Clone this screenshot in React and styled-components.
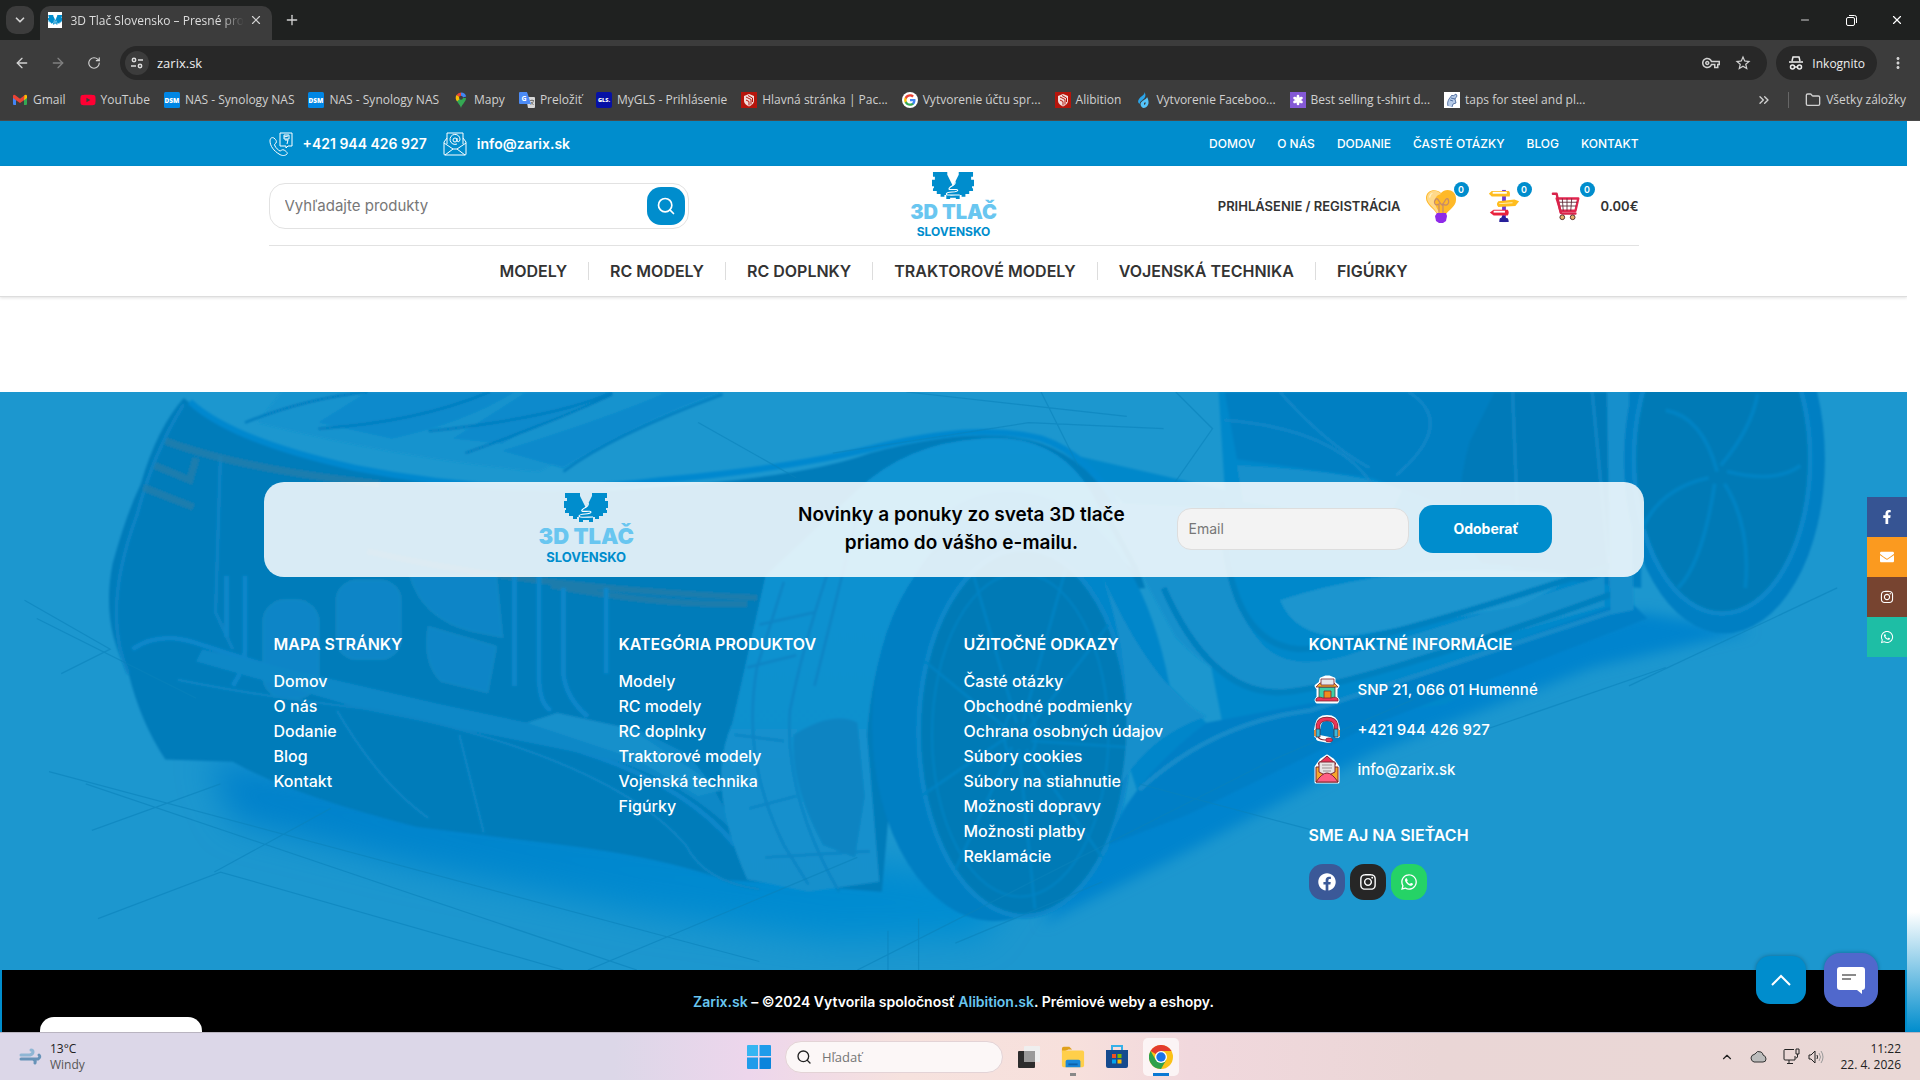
import React from 'react'
import styled, { createGlobalStyle } from 'styled-components'
import { FaFacebookF, FaFacebook, FaEnvelope, FaInstagram, FaWhatsapp, FaYoutube } from 'react-icons/fa'
import { MdOutlineVpnKey, MdStarBorder, MdMoreVert } from 'react-icons/md'
import { LuPlus, LuX, LuChevronDown, LuChevronUp, LuArrowLeft, LuArrowRight, LuRotateCw, LuFolder, LuSearch, LuChevronsRight, LuMinus } from 'react-icons/lu'

const blue = '#008dcd'
const sky = '#69c6f0'
const chromeFont = "12px 'Open Sans', 'Noto Sans', sans-serif"

const topLinks = ['Domov', 'O nás', 'Dodanie', 'Časté otázky', 'Blog', 'Kontakt']
const categories = ['Modely', 'RC modely', 'RC doplnky', 'Traktorové modely', 'Vojenská technika', 'Figúrky']

const footerLists = [
    { title: 'Mapa stránky', links: ['Domov', 'O nás', 'Dodanie', 'Blog', 'Kontakt'] },
    { title: 'Kategória produktov', links: categories },
    {
        title: 'Užitočné odkazy',
        links: [
            'Časté otázky', 'Obchodné podmienky', 'Ochrana osobných údajov', 'Súbory cookies',
            'Súbory na stiahnutie', 'Možnosti dopravy', 'Možnosti platby', 'Reklamácie'
        ]
    }
]

/* ---------- drawings ---------- */

const GearMark = () => (
    <svg viewBox="0 0 44 29" aria-hidden="true">
        <path fill={blue} d="M1 0H16V3L22 15L28 3V0H43V5H41V8H44V15H42V17H43V20H39V23H35V26H31V24H29V29H25V27H19V29H15V24H13V26H9V23H5V20H1V17H2V15H0V8H3V5H1Z" />
        <path fill="none" stroke="#fff" strokeWidth="1.100" d="M24 10C26 14 20 14 18 17C16 20 27 17 27 19C27 22 15 20 15 23C15 25 24 24 29 24" />
    </svg>
)

const BookmarkGlyphs = {
    gmail: (
        <svg viewBox="0 0 16 16">
            <path fill="#4285f4" d="M1 4h3v9H2a1 1 0 0 1-1-1z" />
            <path fill="#34a853" d="M12 5h3v7a1 1 0 0 1-1 1h-2z" />
            <path fill="#fbbc04" d="M12 3.500l1.500-.8Q15 2.600 15 4v2l-3 2.300z" />
            <path fill="#ea4335" d="M1 4Q1.200 2.400 3 3l5 3.800L12.500 3.300l-.5 5L8 11 4 8.200 1 6z" />
        </svg>
    ),
    dsm: (
        <svg viewBox="0 0 16 16">
            <rect width="16" height="16" rx="1.500" fill="#0086e5" />
            <text x="8" y="10.500" textAnchor="middle" fontSize="6.500" fontWeight="800" fill="#fff">DSM</text>
        </svg>
    ),
    maps: (
        <svg viewBox="0 0 16 16">
            <path fill="#34a853" d="M8 16C7 12 3 10 3 6h10c0 4-4 6-5 10z" />
            <path fill="#4285f4" d="M8 0.500a5.500 5.500 0 0 1 5.200 4L8 6z" />
            <path fill="#ea4335" d="M8 0.500a5.500 5.500 0 0 0-4.500 2.500L8 6z" />
            <path fill="#fbbc04" d="M3.500 3A5.500 5.500 0 0 0 4 9.200L8 6z" />
            <circle cx="8" cy="5.800" r="2" fill="#3c3c3c" />
        </svg>
    ),
    translate: (
        <svg viewBox="0 0 16 16">
            <path fill="#d8d8d8" d="M7 5h8a1 1 0 0 1 1 1v9a1 1 0 0 1-1 1H9z" />
            <path fill="#4c8bf5" d="M1 0h7l4 12H1a1 1 0 0 1-1-1V1a1 1 0 0 1 1-1z" />
            <text x="5" y="8.500" textAnchor="middle" fontSize="7" fontWeight="700" fill="#fff">G</text>
            <path fill="none" stroke="#777" d="M11 8.500h4M13 7.500v1M14.500 8.500c0 2-2 3.500-3 4M12 10l2.500 3" />
        </svg>
    ),
    gls: (
        <svg viewBox="0 0 16 16">
            <rect width="16" height="16" rx="2" fill="#0611a5" />
            <text x="8" y="10" textAnchor="middle" fontSize="5.500" fontWeight="800" fill="#fff">GLS.</text>
        </svg>
    ),
    shield: (
        <svg viewBox="0 0 16 16">
            <rect width="16" height="16" fill="#b5150c" />
            <path fill="#f2dedb" d="M8 2l5 2v5c0 2.500-2.500 4.500-5 5.500C5.500 13.500 3 11.500 3 9V4z" />
            <path fill="none" stroke="#b5150c" d="M5 5l5 2.500v5M5 8l3 1.500v4M7 3.500l4.500 2.500v4" />
        </svg>
    ),
    swirl: (
        <svg viewBox="0 0 16 16">
            <path fill="#2aa5ea" d="M9.500 0C10 3 6 4 4 7c-1.500 2-1 4 .5 5C5 9 8 8 9.500 6 11 4 10.500 2 9.500 0z" />
            <path fill="#55c4fa" fillRule="evenodd" d="M12 5c0 2-4 3-6 5.500-1 1.500-.500 4 2 5.500 3 0 5-2 5.500-4.500.4-2-.4-4.500-1.500-6.500zM9 11l1.500-1v2L9 13z" />
        </svg>
    ),
    star: (
        <svg viewBox="0 0 16 16">
            <rect width="16" height="16" fill="#8459d6" />
            <path stroke="#fff" strokeWidth="2.600" strokeLinecap="round" d="M8 4v8M4.500 6l7 4M11.500 6l-7 4" />
        </svg>
    ),
    hand: (
        <svg viewBox="0 0 16 16">
            <rect width="16" height="16" fill="#fff" />
            <path fill="#b6cbe8" stroke="#3b5c92" strokeWidth=".8" d="M4 14c-1-3 0-5 1-7l3-4 1 1 3-2 1 2-2 3 1 4-3 1-1 3M6 8l3 1M7 6l4 1" />
        </svg>
    ),
    youtube: <FaYoutube color="#ff0033" />,
    google: (
        <svg viewBox="0 0 16 16">
            <circle cx="8" cy="8" r="8" fill="#fff" />
            <svg x="2" y="2" width="12" height="12" viewBox="0 0 48 48">
                <path fill="#4285f4" d="M46 24.500c0-1.600-.2-3.200-.4-4.500H24v9h12.500c-.6 3-2.200 5.300-4.700 7v6h7.700C43.800 38 46 31.800 46 24.500z" />
                <path fill="#34a853" d="M24 47c6.200 0 11.400-2 15.500-5l-7.700-6c-2 1.400-4.700 2.300-7.800 2.300-6 0-11-4-13-9.500H3.300v6.200C7.200 42.200 15 47 24 47z" />
                <path fill="#fbbc05" d="M11 28.500a14 14 0 0 1 0-9v-6.200H3.300a23 23 0 0 0 0 21.400z" />
                <path fill="#ea4335" d="M24 10c3.400 0 6.500 1.200 8.900 3.500l6.700-6.700C35.500 3 30.200 1 24 1 15 1 7.200 5.800 3.300 13.300L11 19.500C13 14 18 10 24 10z" />
            </svg>
        </svg>
    )
}

const bookmarks = [
    ['gmail', 'Gmail'], ['youtube', 'YouTube'], ['dsm', 'NAS - Synology NAS'], ['dsm', 'NAS - Synology NAS'],
    ['maps', 'Mapy'], ['translate', 'Preložiť'], ['gls', 'MyGLS - Prihlásenie'], ['shield', 'Hlavná stránka | Pac...'],
    ['google', 'Vytvorenie účtu spr...'], ['shield', 'Alibition'], ['swirl', 'Vytvorenie Faceboo...'],
    ['star', 'Best selling t-shirt d...'], ['hand', 'taps for steel and pl...']
]

const PhoneIcon = () => (
    <svg viewBox="0 0 24 24" fill="none" stroke="#fff" strokeWidth="1">
        <path d="M1 9c0-3 2-4 4-3 2 2 3 3 2 5-1 1-2 1-1 3 1 2 3 4 5 5 1 0 2-2 4-1 2 1 4 3 3 4-2 2-5 2-8 0C5 19 1 14 1 9z" />
        <path d="M11 1h12v13h-4l-2 2v-2h-6zM15 3h5v4h-5zM16 8h3l-1 4M15 5l4-1" />
    </svg>
)

const MailIcon = () => (
    <svg viewBox="0 0 24 24" fill="none" stroke="#fff" strokeWidth="1">
        <path d="M4 12V1h16v11M4 6L1 10v12q0 1 1 1h20q1 0 1-1V10l-3-4M1 11l9 6h4l9-6M2 23l8-6M22 23l-8-6" />
        <circle cx="12" cy="8" r="2" />
        <path d="M14 6v3q2 2 3-1a5 5 0 1 0-3 4" />
    </svg>
)

const BulbIcon = () => (
    <svg viewBox="0 0 32 34">
        <path fill="#ffb928" d="M16 4C21-2 32 1 31 11c0 6-7 10-10 14H12C9 19 1 16 1 9 1 1 11-1 16 4z" />
        <path fill="#ffd98a" d="M16 5C11-1 2 2 2 9c0 6 7 9 10 15h3C8 15 8 7 16 5z" />
        <path fill="none" stroke="#c58a6b" strokeWidth="1.200" d="M14 24V15c-4 3-6-2-3-5 2-2 3 4 6 6 3-3 4-8 6-6 2 4-1 8-5 5v9" />
        <path fill="#fff4c9" d="M4 8q1-4 4-4-3 2-3 5z" />
        <path fill="#8f2ae8" d="M12 24h9l1 3-1 5-3 2h-4l-3-2-1-5z" />
    </svg>
)

const SignIcon = () => (
    <svg viewBox="0 0 32 36">
        <rect x="14" y="1" width="4" height="34" fill="#6b39d0" />
        <path fill="#ffbd1e" d="M3 2h18q2 1 1 6H3L0 5z" />
        <path fill="#fff" d="M4 3h15v2H4z" />
        <path fill="#ffbd1e" d="M10 13l17-2 5 2-4 5-18 1q-3-3 0-6z" />
        <path fill="#fff3c5" d="M11 15l14-1v1l-14 1z" />
        <path fill="#e9223d" d="M5 22h15q2 3 0 6H5l-4-3z" />
        <path fill="#fff" d="M5 23h12v2H5z" />
        <path fill="#27209a" d="M11 35c0-4 1-5 2-4 1-4 4-4 5 0 2-1 3 1 3 4z" />
    </svg>
)

const CartIcon = () => (
    <svg viewBox="0 0 34 34" fill="none">
        <path fill="#fff" stroke="#e2264f" strokeWidth="2.500" strokeLinejoin="round" d="M6 9h23l-3 13H10z" />
        <path stroke="#5b2333" strokeWidth=".9" d="M12 9l1 13M17 9v13M22 9l-1 13M7 13h21M8 17h19" />
        <path stroke="#d9234a" strokeWidth="2.500" strokeLinecap="round" strokeLinejoin="round" d="M2 4h4l4 19q0 2 3 2h13" />
        <circle cx="12" cy="29" r="2.500" fill="#e5b16b" stroke="#4f2a2a" />
        <circle cx="23" cy="29" r="2.500" fill="#e5b16b" stroke="#4f2a2a" />
    </svg>
)

const ShopIcon = () => (
    <svg viewBox="0 0 30 30">
        <path fill="#fff" stroke="#fff" strokeWidth="3" strokeLinejoin="round" d="M9 5l5-2h3l5 2v4l4 3-2 3v8l2 3-1 2H5l-1-2 2-3v-8l-2-3 4-3z" />
        <path fill="#3fcfa6" stroke="#2e4b52" strokeWidth=".8" d="M7 13h16v12H7z" />
        <path fill="#f7b02b" stroke="#7c2630" strokeWidth=".8" d="M8 9h14l4 4H4z" />
        <path fill="#e6e6ea" stroke="#7c2630" strokeWidth=".8" d="M9 5h13v6H9z" />
        <path fill="#f08a1d" stroke="#7c2630" strokeWidth=".8" d="M12 17h7v8h-7z" />
        <path fill="#ec3558" stroke="#7c2630" strokeWidth=".8" d="M4 25q2-3 7-1h8q5-2 7 1v2H4z" />
    </svg>
)

const HeadsetIcon = () => (
    <svg viewBox="0 0 30 30" fill="none">
        <path stroke="#fff" strokeWidth="6" strokeLinecap="round" strokeLinejoin="round" d="M5 21v-5l1-5q1-7 9-7t9 7l1 5v5M7 24l10 2" />
        <path stroke="#7c2630" strokeWidth="4.500" d="M6 16v-5q1-6 9-6t9 6v5" />
        <path stroke="#ec3558" strokeWidth="3" d="M6 16v-5q1-6 9-6t9 6v5" />
        <path fill="#39b8dc" stroke="#3d3340" strokeWidth=".8" d="M4 15h4v8H4zM22 15h4v8h-4z" />
        <path fill="#d8893a" d="M2 16h2v6H2zM26 16h2v6h-2z" />
        <path stroke="#7c2630" strokeWidth="1.200" d="M6 23q2 3 7 3" />
        <ellipse cx="17" cy="26" rx="3.500" ry="2" fill="#ec3558" stroke="#7c2630" strokeWidth=".8" />
    </svg>
)

const LetterIcon = () => (
    <svg viewBox="0 0 30 30">
        <path fill="#fff" stroke="#fff" strokeWidth="3" strokeLinejoin="round" d="M15 2l6 4 5 7v15H4V13l5-7z" />
        <path fill="#ec3558" stroke="#7c2630" d="M15 2l9 8H6z" />
        <path fill="#f7a62b" stroke="#7c2630" d="M4 13h22v15H4z" />
        <path fill="#e8e4e4" stroke="#7c2630" d="M7 8h16v10l-8 4-8-4z" />
        <path stroke="#9a8f90" d="M10 11h10M10 14h10M11 17h8" />
        <path fill="#ff5f83" stroke="#7c2630" d="M4 28q6-9 11-9t11 9z" />
    </svg>
)

const ChromeLogo = () => (
    <svg viewBox="0 0 24 24">
        <circle cx="12" cy="12" r="12" fill="#fbc116" />
        <path fill="#e33b2e" d="M12 12L1.600 6A12 12 0 0 1 22.400 6H12z" />
        <path fill="#2da14c" d="M1.600 6A12 12 0 0 0 12 24l5.200-9L12 12 6.800 15z" />
        <circle cx="12" cy="12" r="6" fill="#fff" />
        <circle cx="12" cy="12" r="4.700" fill="#1a73e8" />
    </svg>
)

// Sketched sports car behind the footer
const CarSketch = () => (
    <Backdrop viewBox="0 320 1557 472" preserveAspectRatio="xMidYMid slice" aria-hidden="true">
        <defs>
            <filter id="soft" x="-20%" y="-20%" width="140%" height="140%"><feGaussianBlur stdDeviation="14" /></filter>
            <filter id="softer" x="-20%" y="-20%" width="140%" height="140%"><feGaussianBlur stdDeviation="5" /></filter>
            <filter id="pencil" x="-5%" y="-5%" width="110%" height="110%"><feGaussianBlur stdDeviation="1" /></filter>
            <linearGradient id="floor" x1="0" y1="0" x2="1" y2="1">
                <stop offset="0" stopColor="#007fca" />
                <stop offset="1" stopColor="#008fd3" />
            </linearGradient>
            <linearGradient id="flank" x1="0" y1="0" x2="0" y2="1">
                <stop offset="0" stopColor="#0c92d2" />
                <stop offset="1" stopColor="#1590cc" />
            </linearGradient>
        </defs>
        <rect y="320" width="1557" height="472" fill="#1c97cf" />

        {/* shadow on the ground */}
        <path filter="url(#soft)" fill="url(#floor)" d="M170 620L600 690L830 720L800 765L680 768L520 745L330 705L190 670Z" />
        <path filter="url(#softer)" fill="#0084ce" d="M910 665L1110 570L1340 500L1430 515L1300 545L1120 615L960 700L850 755Z" />

        <g filter="url(#pencil)">
            {/* upper body and cabin */}
            <path fill="#1593ce" d="M230 320H560L440 385Q330 375 210 345Z" />
            <path fill="#098acc" d="M460 382Q520 345 590 320H545Q500 340 410 368ZM300 320H420Q380 345 320 358L260 345ZM430 320H500Q440 345 410 362L370 358Z" />
            <path fill="none" stroke="#037dbf" strokeWidth="2" d="M200 345Q250 325 300 320M260 350Q340 345 400 320M380 370Q450 345 500 322M460 385Q500 355 590 322M500 320Q460 340 350 352" />
            <path fill="#0688cb" d="M995 320H1330L1320 500L1180 575L1000 600L980 500L940 430L870 370L1000 400Z" />
            <path fill="#007fc2" d="M1000 320H1340V480L1240 470L1200 420L1120 390L1010 375Z" />
            <path fill="#1590cc" d="M1010 380Q1110 385 1145 400L1130 430Q1060 415 1015 410Z" />
            <path fill="#027ab9" d="M1220 320H1325V470L1210 460Q1180 430 1200 360Z" />
            <path fill="none" stroke="#1689c9" strokeWidth="2" d="M1000 343Q1090 350 1120 395M1045 320Q1080 360 1118 382M1150 320Q1190 345 1140 388M1300 320L1315 480M1235 320L1240 450" />

            {/* nose */}
            <path fill="#007bba" d="M150 325Q180 350 250 372Q360 398 500 400Q650 392 710 370Q800 346 850 362Q890 376 915 420L935 480L740 500L720 728L590 718Q540 700 460 690L340 675Q240 650 190 622L135 620Q115 590 105 550Q82 510 92 460Q103 420 115 395Q128 350 150 325Z" />
            <path fill="none" stroke="#0088cf" strokeWidth="5" d="M155 328Q190 360 290 382Q420 408 540 392Q650 382 720 364Q800 345 850 358Q900 375 925 440" />
            <path fill="none" stroke="#0a84c5" strokeWidth="3" d="M150 330Q125 370 112 420Q82 500 105 550M180 372L176 500L190 530" />
            <path fill="none" stroke="#2b7ea6" strokeWidth="6" opacity=".6" d="M135 360Q200 384 310 395M117 398L158 414M126 380L155 392L160 374" />
            <path fill="none" stroke="#2b7ea6" strokeWidth="5" opacity=".7" d="M300 450Q430 480 618 488M450 478Q540 495 610 493" />

            {/* intakes and grille */}
            <g fill="#0785c7" stroke="#168ac6" strokeWidth="1.500">
                <rect x="215" y="490" width="45" height="80" rx="18" />
                <rect x="275" y="474" width="52" height="64" rx="16" />
                <path d="M335 470H405L410 520L385 515Q345 505 335 470Z" />
                <path d="M350 512L405 528L398 565L360 556Q345 540 350 512Z" />
            </g>
            <g fill="none" stroke="#0987ca" strokeWidth="4">
                <path d="M185 470V520M200 470V530Q200 545 190 560M420 470V560M440 470V550Q440 575 450 580M460 480V550Q462 570 480 585M495 480V550" />
                <path d="M108 530Q130 515 160 525L300 570L470 612Q560 640 600 690" />
            </g>
            <path fill="#0988c7" d="M165 530L360 575L440 592L520 595L560 615Q585 640 600 680Q560 640 500 620L300 580L160 540Z" />
            <path fill="#1790cb" d="M430 590L455 582L515 595L590 645L570 650L520 620Z" />
            <path fill="none" stroke="#0b86c5" strokeWidth="2" d="M275 580Q310 640 350 668M375 600L395 680M145 555Q220 570 310 580Q500 620 560 690Q575 720 620 726" />

            {/* front fender */}
            <path fill="url(#flank)" d="M625 470L700 400Q740 362 800 358Q860 352 890 400L925 465L870 420Q810 400 770 440Q715 500 708 600L718 720L660 728L610 718Q575 640 598 590Z" />
            <path fill="none" stroke="#0784c4" strokeWidth="2" d="M675 470Q655 530 645 580Q640 650 685 728M640 475L618 545Q605 620 640 690L660 722M700 420Q680 500 665 560M600 600L640 605M610 545L650 535M620 510L665 500M612 660L650 650M625 700L710 695" />
            <path fill="#0984c2" d="M648 600Q680 580 700 590L706 650L698 700L672 690Q645 640 648 600Z" />
            <path fill="#0086ca" d="M750 440Q790 390 850 405Q930 430 955 560L985 590L930 650L900 560Q880 460 800 455Z" />

            {/* front wheel */}
            <ellipse cx="812" cy="592" rx="100" ry="160" fill="#007fc3" />
            <ellipse cx="836" cy="598" rx="86" ry="150" fill="#007ab6" stroke="#0a88ca" strokeWidth="4" />
            <g fill="none" stroke="#0583c4" strokeWidth="2">
                <path d="M830 590L795 470M835 590L870 465M840 595L905 510M842 605L920 610M838 612L900 700M832 612L845 742M826 610L780 710M822 602L752 650M822 595L755 540" />
                <ellipse cx="833" cy="600" rx="13" ry="22" />
                <ellipse cx="833" cy="600" rx="72" ry="132" strokeWidth="1.500" />
            </g>

            {/* door, sill and skirt */}
            <path fill="#1590cc" d="M900 410L1000 415Q1000 500 1035 530Q1060 550 1110 532L1310 470V495L1080 560Q1010 575 960 520Z" />
            <path fill="#1b95cf" d="M1045 490Q1150 455 1290 470L1240 495L1110 518Q1060 525 1045 490Z" />
            <path fill="none" stroke="#0680bf" strokeWidth="5" d="M998 410Q1000 525 1060 530Q1110 530 1320 460M950 480Q990 570 1050 565Q1110 560 1330 480" />
            <path fill="#168fcc" d="M900 470Q940 560 985 585Q940 600 915 640Q930 560 900 470Z" />
            <path fill="#007fc6" d="M985 590L1120 565L1330 490L1345 505L1120 592L970 665L905 690Q920 640 985 590Z" />
            <path fill="none" stroke="#148cca" strokeWidth="4" d="M930 645Q990 590 1070 580L1330 495" />
            <path fill="#168fcc" d="M1312 320H1330L1334 498L1315 502Z" />

            {/* rear wheel */}
            <ellipse cx="1408" cy="375" rx="82" ry="142" fill="#007fc3" />
            <ellipse cx="1406" cy="375" rx="72" ry="126" fill="#007ab6" stroke="#0a88ca" strokeWidth="4" />
            <g fill="none" stroke="#0583c4" strokeWidth="3">
                <path d="M1402 385Q1390 340 1360 335M1405 380Q1430 350 1435 322M1410 385Q1450 395 1470 380M1408 395Q1430 430 1425 480M1400 395Q1390 460 1370 480M1395 390Q1350 400 1338 440" />
            </g>
        </g>

        {/* construction lines */}
        <g fill="none" stroke="#0a82bb" strokeWidth="1" opacity=".6">
            <path d="M30 505L160 570M75 678L180 640M175 712L270 660M40 630L620 785M70 640L520 792M80 750L180 712L460 792M480 792L700 700M700 792L1040 620L1180 560M780 770L900 720M725 760V792M750 750V792" />
            <path d="M680 370L840 345L950 350M570 345L650 390M850 320L880 380M960 320L990 350L955 400M740 320L920 340M1330 560L1500 480M1200 600L1360 545M930 640L1080 680M20 490L90 530L50 550" />
        </g>
    </Backdrop>
)

const Logo = ({ large }) => (
    <LogoLink href="#" $large={large}>
        <GearMark />
        <strong>3D TLAČ</strong>
        <span>SLOVENSKO</span>
    </LogoLink>
)

/* ---------- page ---------- */

const App = () => {
    return (
        <Screen>
            <GlobalStyle />

            <TabStrip>
                <TabSearch aria-label="Hľadať karty"><LuChevronDown size={14} strokeWidth={3} /></TabSearch>
                <Tab>
                    <Favicon><GearMark /></Favicon>
                    <TabTitle>3D Tlač Slovensko – Presné pro</TabTitle>
                    <BareButton aria-label="Zavrieť kartu"><LuX size={14} /></BareButton>
                </Tab>
                <NewTab aria-label="Nová karta"><LuPlus size={16} /></NewTab>
                <WindowButtons>
                    <BareButton aria-label="Minimalizovať"><LuMinus size={12} /></BareButton>
                    <BareButton aria-label="Obnoviť">
                        <svg width="11" height="11" viewBox="0 0 11 11" fill="none" stroke="#fff"><rect x=".5" y="2.500" width="8" height="8" rx="1.500" /><path d="M3 .5h5.500q2 0 2 2V8" /></svg>
                    </BareButton>
                    <BareButton aria-label="Zavrieť"><LuX size={14} color="#fff" /></BareButton>
                </WindowButtons>
            </TabStrip>

            <Toolbar>
                <NavButtons>
                    <BareButton aria-label="Späť"><LuArrowLeft size={16} /></BareButton>
                    <BareButton aria-label="Dopredu" $dim><LuArrowRight size={16} /></BareButton>
                    <BareButton aria-label="Obnoviť stránku"><LuRotateCw size={14} /></BareButton>
                </NavButtons>
                <Omnibox>
                    <SiteInfo aria-label="Informácie o stránke">
                        <svg width="14" height="14" viewBox="0 0 14 14" fill="none" stroke="#ddd" strokeWidth="1.500"><circle cx="4" cy="4" r="1.700" /><path d="M8 4h5M1 10h5" /><circle cx="10" cy="10" r="1.700" /></svg>
                    </SiteInfo>
                    <Address aria-label="Adresa" defaultValue="zarix.sk" />
                    <BareButton aria-label="Heslá"><MdOutlineVpnKey size={18} /></BareButton>
                    <BareButton aria-label="Pridať záložku"><MdStarBorder size={18} /></BareButton>
                </Omnibox>
                <Incognito>
                    <svg width="16" height="16" viewBox="0 0 16 16" fill="none" stroke="#eee" strokeWidth="1.500"><path d="M4 6l1-4h6l1 4M1 7h14" /><circle cx="4.500" cy="12" r="2" /><circle cx="11.500" cy="12" r="2" /><path d="M6.500 12h3" /></svg>
                    Inkognito
                </Incognito>
                <BareButton aria-label="Ponuka"><MdMoreVert size={18} /></BareButton>
            </Toolbar>

            <BookmarkBar>
                {bookmarks.map(([icon, label], i) => (
                    <Bookmark href="#" key={i}>{BookmarkGlyphs[icon]}{label}</Bookmark>
                ))}
                <BookmarkEnd>
                    <BareButton aria-label="Ďalšie záložky"><LuChevronsRight size={16} /></BareButton>
                    <i />
                    <Bookmark href="#"><LuFolder />Všetky záložky</Bookmark>
                </BookmarkEnd>
            </BookmarkBar>

            <Viewport>
                <Site>
                    <TopBar>
                        <Container>
                            <Contacts>
                                <a href="#"><PhoneIcon />+421 944 426 927</a>
                                <a href="#"><MailIcon />info@zarix.sk</a>
                            </Contacts>
                            <TopMenu>
                                {topLinks.map((link) => <a href="#" key={link}>{link}</a>)}
                            </TopMenu>
                        </Container>
                    </TopBar>

                    <Header>
                        <HeaderRow>
                            <SearchBox>
                                <input aria-label="Vyhľadávanie" placeholder="Vyhľadajte produkty" />
                                <button aria-label="Hľadať"><LuSearch size={20} /></button>
                            </SearchBox>
                            <Logo />
                            <Account>
                                <a href="#">Prihlásenie / Registrácia</a>
                                <IconLink href="#" aria-label="Obľúbené"><BulbIcon /><Badge>0</Badge></IconLink>
                                <IconLink href="#" aria-label="Porovnať"><SignIcon /><Badge>0</Badge></IconLink>
                                <IconLink href="#" aria-label="Košík"><CartIcon /><Badge>0</Badge></IconLink>
                                <Price>0.00€</Price>
                            </Account>
                        </HeaderRow>
                        <CategoryNav>
                            {categories.map((name) => <a href="#" key={name}>{name}</a>)}
                        </CategoryNav>
                    </Header>

                    <Footer>
                        <CarSketch />
                        <Newsletter>
                            <Logo large />
                            <p>Novinky a ponuky zo sveta 3D tlače priamo do vášho e-mailu.</p>
                            <form onSubmit={(e) => e.preventDefault()}>
                                <input type="email" aria-label="Email" placeholder="Email" />
                                <button>Odoberať</button>
                            </form>
                        </Newsletter>
                        <FooterGrid>
                            {footerLists.map(({ title, links }) => (
                                <div key={title}>
                                    <FooterTitle>{title}</FooterTitle>
                                    <FooterList>
                                        {links.map((link) => <li key={link}><a href="#">{link}</a></li>)}
                                    </FooterList>
                                </div>
                            ))}
                            <div>
                                <FooterTitle>Kontaktné informácie</FooterTitle>
                                <ContactLine><ShopIcon />SNP 21, 066 01 Humenné</ContactLine>
                                <ContactLine><HeadsetIcon />+421 944 426 927</ContactLine>
                                <ContactLine><LetterIcon />info@zarix.sk</ContactLine>
                                <FooterTitle $spaced>Sme aj na sieťach</FooterTitle>
                                <Socials>
                                    <Social href="#" aria-label="Facebook" $color="#3b5998"><FaFacebook /></Social>
                                    <Social href="#" aria-label="Instagram" $color="#262626"><FaInstagram /></Social>
                                    <Social href="#" aria-label="WhatsApp" $color="#25d366"><FaWhatsapp /></Social>
                                </Socials>
                            </div>
                        </FooterGrid>
                    </Footer>

                    <Copyright>
                        <p><a href="#">Zarix.sk</a> – ©2024 Vytvorila spoločnosť <a href="#">Alibition.sk</a>. Prémiové weby a eshopy.</p>
                    </Copyright>
                </Site>
                <Scrollbar><div /></Scrollbar>

                <ShareBar>
                    <Share href="#" aria-label="Facebook" $color="#365493"><FaFacebookF /></Share>
                    <Share href="#" aria-label="Email" $color="#fb9a1f"><FaEnvelope /></Share>
                    <Share href="#" aria-label="Instagram" $color="#774430"><FaInstagram /></Share>
                    <Share href="#" aria-label="WhatsApp" $color="#1ebea5"><FaWhatsapp /></Share>
                </ShareBar>
                <Floating>
                    <ToTop aria-label="Hore">
                        <svg width="20" height="12" viewBox="0 0 20 12" fill="none" stroke="#fff" strokeWidth="2"><path d="M1 11l9-9 9 9" /></svg>
                    </ToTop>
                    <Chat aria-label="Chat">
                        <svg width="28" height="28" viewBox="0 0 28 28"><path fill="#fff" d="M3 1h22q3 0 3 3v17q0 3-3 3v4l-5-4H3q-3 0-3-3V4q0-3 3-3z" /><path stroke="#8a8a8a" strokeWidth="2" d="M5 9h14M5 13h9" /></svg>
                    </Chat>
                </Floating>
                <Popup />
            </Viewport>

            <Taskbar>
                <Weather>
                    <svg width="24" height="20" viewBox="0 0 24 20" fill="none" strokeWidth="3" strokeLinecap="round"><path stroke="#8fb6d4" d="M2 8h9q3-1 3-3t-2-2" /><path stroke="#6793b8" d="M2 12h17q3-2 1-4M8 12h6q3 1 2 4" /></svg>
                    <div>13°C<span>Windy</span></div>
                </Weather>
                <TaskCenter>
                    <TaskButton aria-label="Štart">
                        <svg width="24" height="24" viewBox="0 0 24 24" fill="#0a84dc"><path fill="#35b5f2" d="M0 1q0-1 1-1h10v11H0z" /><path fill="#1f9bea" d="M12.500 0H23q1 0 1 1v10H12.500zM0 12.500h11V24H1q-1 0-1-1z" /><path d="M12.500 12.500H24V23q0 1-1 1H12.500z" /></svg>
                    </TaskButton>
                    <TaskSearch>
                        <LuSearch size={16} strokeWidth={2} />
                        <input aria-label="Hľadať" placeholder="Hľadať" />
                    </TaskSearch>
                    <TaskButton aria-label="Zobrazenie úloh">
                        <svg width="24" height="24" viewBox="0 0 24 24"><rect x="1" y="6" width="17" height="17" rx="1" fill="#2c2c2c" /><rect x="7" y="1" width="16" height="16" rx="1" fill="#efefef" /><path fill="#9a9a9a" d="M7 6h11v11H7z" /></svg>
                    </TaskButton>
                    <TaskButton aria-label="Prieskumník" $mark="#888">
                        <svg width="26" height="24" viewBox="0 0 26 24"><path fill="#e0a01b" d="M1 3q0-2 2-2h6l3 3h-4L1 7z" /><path fill="#ffcf4a" d="M1 5h22q2 0 2 2v14q0 2-2 2H3q-2 0-2-2z" /><path fill="#1a87d8" d="M5 23v-6q0-2 2-2h12q2 0 2 2v6z" /><path fill="#0d62aa" d="M8 19h10v2H8z" /></svg>
                    </TaskButton>
                    <TaskButton aria-label="Store">
                        <svg width="24" height="24" viewBox="0 0 24 24"><path fill="none" stroke="#35b0e8" strokeWidth="2" d="M7 6V1h10v5" /><path fill="#154a8e" d="M1 5h22v16q0 2-2 2H3q-2 0-2-2z" /><path fill="#f25022" d="M7 9h4v4H7z" /><path fill="#7fba00" d="M12.500 9h4v4h-4z" /><path fill="#00a4ef" d="M7 14.500h4v4H7z" /><path fill="#ffb900" d="M12.500 14.500h4v4h-4z" /></svg>
                    </TaskButton>
                    <TaskButton aria-label="Chrome" $active $mark="#0a78d4"><ChromeLogo /></TaskButton>
                </TaskCenter>
                <Tray>
                    <LuChevronUp size={14} />
                    <svg width="17" height="14" viewBox="0 0 17 14" fill="#bcbcbc" stroke="#333"><path d="M4 12q-3-1-3-4t4-4q2-4 6-2 2 1 2 3 3 1 3 4t-3 3z" /></svg>
                    <TrayGroup>
                        <svg width="17" height="17" viewBox="0 0 17 17" fill="none" stroke="#222"><path d="M11 1.500H2q-1 0-1 1V11q0 1 1 1h10V8M6 12v3.500M4 15.500h6M13 1h3v5h-3zM14.500 6v3q0 1-2 1" /></svg>
                        <svg width="16" height="14" viewBox="0 0 16 14" fill="none" stroke="#222"><path d="M1 5h2l4-4v12L3 9H1zM9 5q1 2 0 4" /><path stroke="#999" d="M11 3q3 4 0 8M13 1q4 6 0 12" /></svg>
                    </TrayGroup>
                    <div>11:22<br />22. 4. 2026</div>
                </Tray>
            </Taskbar>
        </Screen>
    )
}

const GlobalStyle = createGlobalStyle`
    * {
        box-sizing: border-box;
    }
    body {
        margin: 0;
        font-family: Inter, 'Liberation Sans', sans-serif;
        font-size: 14px;
        color: #333;
    }
    a {
        color: inherit;
        text-decoration: none;
    }
    button, input {
        font: inherit;
        color: inherit;
        border: 0;
        padding: 0;
        background: none;
    }
    p {
        margin: 0;
    }
    svg {
        flex-shrink: 0;
    }
`

const Screen = styled.div`
    display: flex;
    flex-direction: column;
    min-height: 100vh;
`

/* browser */

const TabStrip = styled.div`
    display: flex;
    align-items: center;
    gap: 6px;
    height: 40px;
    padding-left: 6px;
    background: #1f2120;
    color: #ddd;
    font: ${chromeFont};
`
const BareButton = styled.button`
    display: flex;
    align-items: center;
    justify-content: center;
    min-width: 24px;
    height: 24px;
    color: ${(p) => (p.$dim ? '#808080' : '#d2d2d2')};
`
const TabSearch = styled(BareButton)`
    width: 28px;
    height: 28px;
    border-radius: 10px;
    background: #3c3c3c;
`
const NewTab = styled(BareButton)`
    width: 28px;
    height: 28px;
`
const Tab = styled.div`
    display: flex;
    align-items: center;
    align-self: flex-end;
    width: 232px;
    height: 34px;
    padding: 0 4px 6px 8px;
    border-radius: 10px 10px 0 0;
    background: #3c3c3c;
`
const Favicon = styled.span`
    display: flex;
    align-items: center;
    width: 16px;
    height: 16px;
    margin-right: 8px;
    background: #fff;
`
const TabTitle = styled.span`
    flex: 1;
    white-space: nowrap;
    mask-image: linear-gradient(90deg, #000 86%, transparent);
`
const WindowButtons = styled.div`
    display: flex;
    gap: 22px;
    margin-left: auto;
    padding-right: 11px;
`
const Toolbar = styled.div`
    display: flex;
    align-items: center;
    gap: 9px;
    height: 46px;
    padding: 0 10px;
    background: #3c3c3c;
    color: #eee;
    font: ${chromeFont};
`
const NavButtons = styled.div`
    display: flex;
    gap: 12px;
    padding-right: 5px;
`
const Omnibox = styled.div`
    display: flex;
    flex: 1;
    align-items: center;
    gap: 8px;
    height: 34px;
    padding: 0 12px 0 5px;
    border-radius: 17px;
    background: #282828;
    font-size: 13px;
`
const SiteInfo = styled(BareButton)`
    border-radius: 12px;
    background: #3c3c3c;
`
const Address = styled.input`
    flex: 1;
`
const Incognito = styled.button`
    display: flex;
    align-items: center;
    gap: 8px;
    height: 34px;
    padding: 0 12px;
    border-radius: 17px;
    background: #282828;
`
const BookmarkBar = styled.div`
    display: flex;
    align-items: center;
    gap: 14px;
    height: 35px;
    padding: 0 14px 7px 12px;
    border-bottom: 1px solid #4a4a4a;
    background: #3c3c3c;
    color: #d0d0d0;
    font: ${chromeFont};
`
const Bookmark = styled.a`
    display: flex;
    align-items: center;
    gap: 5px;
    white-space: nowrap;
    svg {
        width: 16px;
        height: 16px;
    }
    svg svg {
        width: 12px;
        height: 12px;
    }
`
const BookmarkEnd = styled.div`
    display: flex;
    align-items: center;
    gap: 12px;
    margin-left: auto;
    i {
        width: 1px;
        height: 16px;
        margin-right: 4px;
        background: #666;
    }
`

/* site */

const Viewport = styled.div`
    position: relative;
    display: flex;
    flex: 1;
    background: #fff;
`
const Site = styled.div`
    display: flex;
    flex: 1;
    flex-direction: column;
`
const Scrollbar = styled.div`
    display: flex;
    flex-direction: column;
    justify-content: flex-end;
    width: 13px;
    background: #fff;
    div {
        height: 120px;
        background: linear-gradient(#fff, ${blue});
    }
`
const Container = styled.div`
    display: flex;
    align-items: center;
    justify-content: space-between;
    width: 100%;
    max-width: 1370px;
    margin: 0 auto;
`
const TopBar = styled.div`
    display: flex;
    height: 45px;
    background: ${blue};
    color: #fff;
`
const Contacts = styled.div`
    display: flex;
    gap: 16px;
    font-weight: 600;
    a {
        display: flex;
        align-items: center;
        gap: 10px;
    }
    svg {
        width: 24px;
        height: 24px;
    }
`
const TopMenu = styled.nav`
    display: flex;
    gap: 22px;
    font-size: 12px;
    font-weight: 500;
    text-transform: uppercase;
`
const Header = styled.header`
    border-bottom: 1px solid #ddd;
    box-shadow: 0 1px 3px rgba(0, 0, 0, .12);
`
const HeaderRow = styled.div`
    display: grid;
    grid-template-columns: 1fr auto 1fr;
    align-items: center;
    width: 100%;
    max-width: 1370px;
    height: 80px;
    margin: 0 auto;
    border-bottom: 1px solid #e2e2e2;
`
const SearchBox = styled.div`
    display: flex;
    align-items: center;
    width: 420px;
    height: 46px;
    padding: 0 3px 0 15px;
    border: 1px solid #e2e2e2;
    border-radius: 16px;
    input {
        flex: 1;
        font-size: 15px;
    }
    input::placeholder {
        color: #777;
    }
    button {
        display: flex;
        align-items: center;
        justify-content: center;
        width: 38px;
        height: 38px;
        border-radius: 14px;
        background: ${blue};
        color: #fff;
    }
`
const LogoLink = styled.a`
    display: flex;
    flex-direction: column;
    align-items: center;
    color: ${blue};
    font-weight: 700;
    svg {
        width: ${(p) => (p.$large ? 44 : 42)}px;
    }
    strong {
        color: ${sky};
        font-size: ${(p) => (p.$large ? 22 : 20)}px;
        line-height: ${(p) => (p.$large ? 28 : 26)}px;
    }
    span {
        font-size: ${(p) => (p.$large ? 13 : 12)}px;
        line-height: 14px;
    }
`
const Account = styled.div`
    display: flex;
    align-items: center;
    justify-content: flex-end;
    font-size: 13px;
    font-weight: 600;
    text-transform: uppercase;
`
const IconLink = styled.a`
    position: relative;
    display: flex;
    margin-left: 24px;
    & + & {
        margin-left: 31px;
    }
    svg {
        width: 32px;
        height: 34px;
    }
`
const Badge = styled.span`
    position: absolute;
    top: -7px;
    right: -12px;
    width: 15px;
    border-radius: 8px;
    background: ${blue};
    color: #fff;
    font-size: 9px;
    line-height: 15px;
    text-align: center;
`
const Price = styled.span`
    margin-left: 18px;
`
const CategoryNav = styled.nav`
    display: flex;
    justify-content: center;
    padding: 16px 0;
    font-size: 16px;
    font-weight: 600;
    line-height: 18px;
    text-transform: uppercase;
    a {
        padding: 0 21px;
    }
    a + a {
        border-left: 1px solid #ddd;
    }
`

/* footer */

const Footer = styled.footer`
    position: relative;
    margin-top: 95px;
    padding: 90px 0 70px;
    background: #1c97cf;
    color: #fff;
`
const Backdrop = styled.svg`
    position: absolute;
    top: 0;
    left: 0;
    width: 100%;
    height: 100%;
`
const Newsletter = styled.div`
    position: relative;
    display: grid;
    grid-template-columns: 375fr 375fr 403fr;
    align-items: center;
    justify-items: center;
    max-width: 1380px;
    height: 95px;
    margin: 0 auto;
    padding: 0 91px 2px 135px;
    border-radius: 20px;
    background: rgba(255, 255, 255, .85);
    p {
        max-width: 340px;
        color: #000;
        font-size: 19px;
        font-weight: 600;
        line-height: 28px;
        text-align: center;
    }
    form {
        display: flex;
        align-items: center;
        justify-self: end;
        gap: 10px;
    }
    input {
        width: 232px;
        height: 42px;
        padding: 0 10px;
        border: 1px solid #ddd;
        border-radius: 14px;
        background: #f3f3f3;
    }
    input::placeholder {
        color: #777;
    }
    button {
        width: 133px;
        height: 48px;
        border-radius: 14px;
        background: ${blue};
        font-weight: 700;
    }
`
const FooterGrid = styled.div`
    position: relative;
    display: grid;
    grid-template-columns: repeat(4, 1fr);
    max-width: 1380px;
    margin: 55px auto 0;
    & > div {
        padding-left: 10px;
    }
`
const FooterTitle = styled.h3`
    margin: ${(p) => (p.$spaced ? '34px 0 17px' : '0 0 13px')};
    font-size: 16px;
    font-weight: 600;
    line-height: 24px;
    text-transform: uppercase;
`
const FooterList = styled.ul`
    margin: 0;
    padding: 0;
    list-style: none;
    font-size: 16px;
    font-weight: 500;
    line-height: 25px;
`
const ContactLine = styled.div`
    display: flex;
    align-items: center;
    gap: 16px;
    height: 40px;
    padding-left: 3px;
    font-size: 15px;
    font-weight: 500;
    svg {
        width: 30px;
        height: 30px;
    }
`
const Socials = styled.div`
    display: flex;
    gap: 5px;
`
const Social = styled.a`
    display: flex;
    align-items: center;
    justify-content: center;
    width: 36px;
    height: 36px;
    border-radius: 14px;
    background: ${(p) => p.$color};
    font-size: 18px;
`
const Copyright = styled.div`
    display: flex;
    flex: 1;
    align-items: center;
    justify-content: center;
    min-height: 62px;
    border: solid ${blue};
    border-width: 0 2px;
    background: #000;
    color: #fff;
    font-weight: 600;
    a {
        color: ${sky};
    }
`

/* floating parts */

const ShareBar = styled.div`
    position: absolute;
    top: 376px;
    right: 13px;
`
const Share = styled.a`
    display: flex;
    align-items: center;
    justify-content: center;
    width: 40px;
    height: 40px;
    background: ${(p) => p.$color};
    color: #fff;
`
const Floating = styled.div`
    position: absolute;
    right: 42px;
    bottom: 25px;
    display: flex;
    align-items: center;
    gap: 18px;
`
const ToTop = styled.button`
    display: flex;
    align-items: center;
    justify-content: center;
    width: 50px;
    height: 48px;
    border-radius: 14px;
    background: ${blue};
    box-shadow: 0 0 4px rgba(0, 0, 0, .3);
    color: #fff;
`
const Chat = styled(ToTop)`
    width: 54px;
    height: 54px;
    border-radius: 16px;
    background: #5068cc;
`
const Popup = styled.div`
    position: absolute;
    bottom: 0;
    left: 40px;
    width: 162px;
    height: 15px;
    border-radius: 14px 14px 0 0;
    background: #fff;
`

/* taskbar */

const Taskbar = styled.div`
    display: grid;
    grid-template-columns: 1fr auto 1fr;
    align-items: center;
    height: 48px;
    padding: 0 19px;
    border-top: 1px solid #b9b4c0;
    background: linear-gradient(90deg, #dcd7e8 0%, #dcd7e8 32%, #edd6ec 39%, #f6e2de 47%, #f7e0dc 56%, #f1d8dd 62%, #ead6d6 75%, #ead8d6 100%);
    color: #222;
    font: ${chromeFont};
`
const Weather = styled.div`
    display: flex;
    align-items: center;
    gap: 7px;
    line-height: 16px;
    span {
        display: block;
        color: #555;
    }
`
const TaskCenter = styled.div`
    display: flex;
    align-items: center;
    gap: 8px;
`
const TaskButton = styled.button`
    display: flex;
    align-items: center;
    justify-content: center;
    width: 36px;
    height: 38px;
    border-radius: 5px;
    background-color: ${(p) => (p.$active ? 'rgba(255, 255, 255, .7)' : 'transparent')};
    background-image: ${(p) => (p.$mark ? `linear-gradient(${p.$mark}, ${p.$mark})` : 'none')};
    background-position: center bottom;
    background-repeat: no-repeat;
    background-size: ${(p) => (p.$active ? 16 : 6)}px 3px;
    svg {
        max-width: 24px;
    }
`
const TaskSearch = styled.label`
    display: flex;
    align-items: center;
    gap: 10px;
    width: 218px;
    height: 32px;
    padding: 0 10px;
    border: 1px solid #e3d3d6;
    border-radius: 16px;
    background: #fcf7f7;
    font-size: 13px;
    input {
        width: 100%;
    }
`
const Tray = styled.div`
    display: flex;
    align-items: center;
    justify-content: flex-end;
    gap: 16px;
    line-height: 16px;
    text-align: right;
`
const TrayGroup = styled.span`
    display: flex;
    align-items: center;
    gap: 8px;
`

export default App
